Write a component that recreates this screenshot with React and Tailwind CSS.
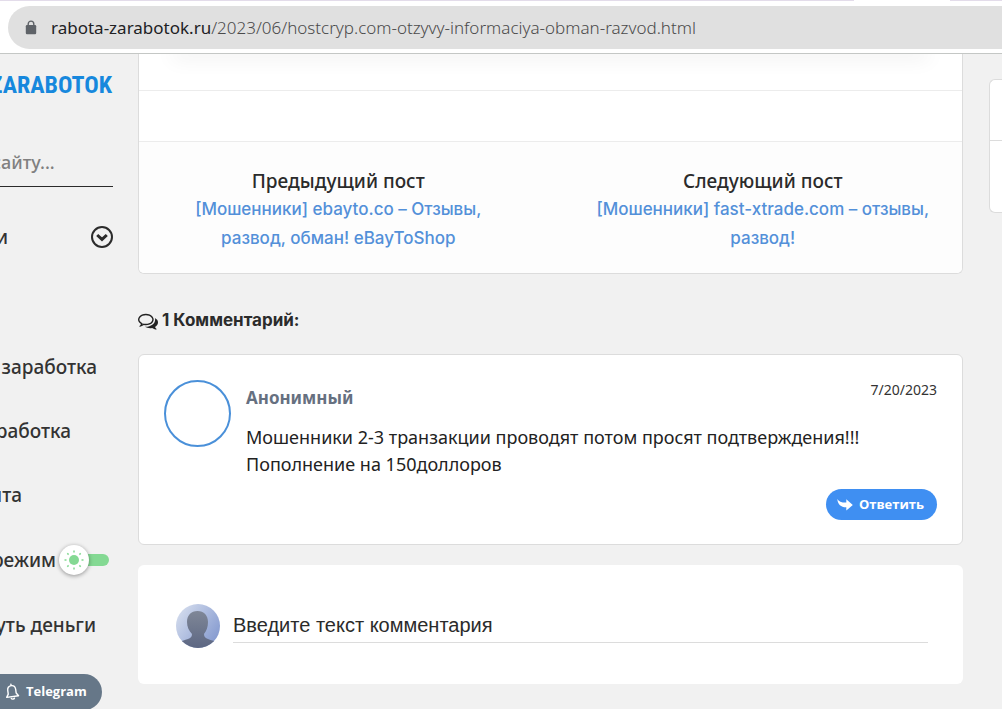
import React from "react";

const menuItems = [
  { text: "заработка", pad: "pr-[41px]" },
  { text: "работка", pad: "pr-[67px]" },
  { text: "йта", pad: "pr-[116px]" },
];

function LockIcon() {
  return (
    <svg viewBox="0 0 12 15" className="h-[15px] w-3 shrink-0" aria-hidden="true">
      <rect x="0.8" y="5" width="10.4" height="9.2" rx="1.2" fill="#5f6368" />
      <path d="M3.2 5.5V3.9a2.8 2.8 0 0 1 5.6 0v1.6" fill="none" stroke="#5f6368" strokeWidth="1.4" />
    </svg>
  );
}

function ChevronCircle() {
  return (
    <svg viewBox="0 0 24 24" className="size-6" aria-hidden="true" fill="none" stroke="#2b2b2b">
      <circle cx="12" cy="12" r="10" strokeWidth="2" />
      <path d="M7.2 10l4.8 4.4 4.8-4.4" strokeWidth="3" />
    </svg>
  );
}

function CommentsIcon() {
  return (
    <svg viewBox="0 0 1792 1792" className="size-5" fill="#222" aria-hidden="true">
      <path d="M704 384q-153 0-286 52t-211.5 141-78.5 191q0 82 53 158t149 132l97 56-35 84q34-20 62-39l44-31 53 10q78 14 153 14 153 0 286-52t211.5-141 78.5-191-78.5-191-211.5-141-286-52zm0-128q191 0 353.5 68.5t256.5 186.5 94 257-94 257-256.5 186.5-353.5 68.5q-86 0-176-16-124 88-278 128-36 9-86 16h-3q-11 0-20.5-8t-11.5-21q-1-3-1-6.5t.5-6.5 2-6l2.5-5 3.5-5.5 4-5 4.5-5 4-4.5q5-6 23-25t26-29.5 22.5-29 25-38.5 20.5-44q-124-72-195-177t-71-224q0-139 94-257t256.5-186.5 353.5-68.5zm822 1169q10 24 20.5 44t25 38.5 22.5 29 26 29.5 23 25q1 1 4 4.5t4.5 5 4 5 3.5 5.5l2.5 5 2 6 .5 6.5-1 6.500q-3 14-13 22t-22 7q-50-7-86-16-154-40-278-128-90 16-176 16-271 0-472-132 58 4 88 4 161 0 309-45t264-129q125-92 192-212t67-254q0-77-23-152 129 71 204 178t75 230q0 120-71 224.500t-195 176.500z" />
    </svg>
  );
}

function ReplyIcon() {
  return (
    <svg viewBox="0 0 16 13" className="h-[13px] w-4" fill="#fff" aria-hidden="true">
      <path d="M0.3 1C1.6 3.6 4.6 4.7 9.3 4.6V1.2L15.8 7 9.3 12.6V9.3C4 9.4 0.8 6.4 0.3 1z" />
    </svg>
  );
}

function BellIcon() {
  return (
    <svg viewBox="0 0 16 18" className="h-[18px] w-4" fill="none" stroke="#fff" strokeWidth="1.4" strokeLinejoin="round" strokeLinecap="round" aria-hidden="true">
      <g transform="rotate(-8 8 9)">
        <path d="M8 2.6c-2.600 0-4 1.800-4 4.200v3.800L2 13.600h12L12 10.600V6.800C12 4.400 10.600 2.600 8 2.600z" />
        <path d="M8 2.400V1.200M6.400 15.400c.6 1 2.600 1 3.200 0" />
      </g>
    </svg>
  );
}

function SunIcon() {
  return (
    <svg viewBox="0 0 20 20" className="size-5" fill="#84d993" stroke="#84d993" aria-hidden="true">
      <circle cx="10" cy="10" r="5" stroke="none" />
      <path d="M10 .5v2M10 17.500v2M.5 10h2M17.500 10h2M3.300 3.300l1.300 1.300M15.400 15.400l1.300 1.300M3.300 16.700l1.300-1.300M15.400 4.600l1.300-1.300" strokeWidth="1.5" />
    </svg>
  );
}

function Avatar() {
  return (
    <svg viewBox="0 0 44 44" className="size-11 shrink-0" aria-hidden="true">
      <defs>
        <linearGradient id="sky" x1="0" y1="0" x2="1" y2="0.7">
          <stop offset="0" stopColor="#dce3f0" />
          <stop offset="1" stopColor="#869bd0" />
        </linearGradient>
        <linearGradient id="body" x1="0" y1="0" x2="0" y2="1">
          <stop offset="0" stopColor="#7f8797" />
          <stop offset="1" stopColor="#5d6783" />
        </linearGradient>
        <clipPath id="round">
          <circle cx="22" cy="22" r="22" />
        </clipPath>
      </defs>
      <g clipPath="url(#round)">
        <rect width="44" height="44" fill="url(#sky)" />
        <path d="M21.500 7C15 7 11 11.500 11 18c0 5 2 9 5 12 0 3-1.500 4-4 5-3 1.200-7 2-12 4v5h44v-5c-5-2-9-2.500-12-4-2.500-1-4-2-4-5 2.500-3 4-7 4-12C32 11.500 28 7 21.500 7z" fill="url(#body)" />
      </g>
    </svg>
  );
}

function Sidebar() {
  return (
    <aside className="w-[138px] shrink-0 overflow-hidden font-['Noto_Sans',sans-serif] text-[19px] font-medium text-[#333]">
      <a href="#home" className="flex h-[62px] items-center justify-end pr-[26px] font-['Roboto_Condensed','Liberation_Sans_Narrow',Roboto,sans-serif] text-2xl font-bold text-[#1788dd]">
        ZARABOTOK
      </a>
      <form className="mt-[22px] mr-[25px] border-b border-[#2b2b2b]">
        <input aria-label="Поиск" placeholder="сайту..." className="-ml-2 block h-12 w-full bg-transparent text-lg outline-none placeholder:text-[#808080]" />
      </form>
      <button type="button" className="mt-[18px] flex h-16 w-full items-center justify-between pr-6">
        <span className="-ml-1">и</span>
        <ChevronCircle />
      </button>
      <nav className="mt-[66px]">
        {menuItems.map((item) => (
          <a key={item.text} href="#page" className={"flex h-16 items-center justify-end whitespace-nowrap " + item.pad}>
            {item.text}
          </a>
        ))}
        <label className="flex h-[66px] items-center justify-end pr-[29px]">
          <span className="mr-[3px]">режим</span>
          <span className="relative flex h-8 w-[50px] shrink-0 items-center">
            <input type="checkbox" className="peer absolute inset-0 opacity-0" />
            <span className="ml-3 h-3 flex-1 rounded-full bg-[#84d993]" />
            <span className="absolute left-0 flex size-[30px] items-center justify-center rounded-full bg-white shadow-[0_1px_4px_rgba(0,0,0,0.4)]">
              <SunIcon />
            </span>
          </span>
        </label>
        <a href="#refund" className="flex h-16 items-center justify-end whitespace-nowrap pr-[42px]">
          уть деньги
        </a>
      </nav>
      <a href="#telegram" className="mt-[17px] mr-9 flex h-9 items-center rounded-r-full bg-[#667788] pl-1 font-['Open_Sans',sans-serif] text-[13px] font-bold text-white">
        <BellIcon />
        <span className="ml-[6px]">Telegram</span>
      </a>
    </aside>
  );
}

function PostLink({ label, children }) {
  return (
    <div className="flex-1 px-6 text-center">
      <div className="font-['Noto_Sans',sans-serif] text-[19px] leading-[27px] font-medium text-[#2b2b2b]">{label}</div>
      <a href="#post" className="font-[Inter,sans-serif] text-[17px] leading-[29px] font-medium text-[#5390d9]">
        {children}
      </a>
    </div>
  );
}

export default function App() {
  return (
    <div className="flex h-screen flex-col overflow-hidden bg-[#f1f1f1]">
      <header className="shrink-0 border-b border-[#c4c7c5] bg-white">
        <div className="flex h-[6px] justify-end">
          <div className="h-px flex-1 bg-[#e3dcea]" />
          <div className="w-24" />
          <div className="h-px w-[52px] bg-[#e3dcea]" />
        </div>
        <div className="mb-1 ml-2 flex h-[43px] items-center rounded-l-full bg-[#e0e0e0] pl-[17px] font-['Noto_Sans',sans-serif] text-[17px]">
          <LockIcon />
          <span className="ml-[14px] whitespace-nowrap text-[#202124]">
            rabota-zarabotok.ru<span className="font-light text-[#4a4a4a]">/2023/06/hostcryp.com-otzyvy-informaciya-obman-razvod.html</span>
          </span>
        </div>
      </header>
      <div className="flex min-h-0 flex-1">
        <Sidebar />
        <main className="min-w-0 flex-1">
          <article className="overflow-hidden rounded-b-md border border-t-0 border-[#dcdcdc] bg-white">
            <div className="h-9">
              <div className="mx-9 h-0 shadow-[0_0_20px_3px_rgba(0,0,0,0.12)]" />
            </div>
            <div className="h-[51px] border-t border-[#ececec]" />
            <div className="flex gap-[26px] border-t border-[#ececec] bg-[#fdfdfd] pt-[26px] pb-5">
              <PostLink label="Предыдущий пост">
                [Мошенники] ebayto.co – Отзывы, развод, обман! eBayToShop
              </PostLink>
              <PostLink label="Следующий пост">
                [Мошенники] fast-xtrade.com – отзывы, развод!
              </PostLink>
            </div>
          </article>
          <h2 className="mt-[33px] flex h-7 items-center gap-1 font-[Inter,sans-serif] text-[17px] font-bold text-[#2b2b2b]">
            <CommentsIcon />1 Комментарий:
          </h2>
          <section className="mt-[19px] rounded-md border border-[#dcdcdc] bg-white p-[25px] pb-6">
            <div className="flex">
              <div className="size-[67px] shrink-0 rounded-full border-2 border-[#4a90d9]" />
              <div className="ml-[15px] min-w-0 flex-1 font-['Noto_Sans',sans-serif]">
                <div className="flex justify-between">
                  <span className="pt-1 text-[17px] leading-7 font-bold text-[#667080]">Анонимный</span>
                  <time className="text-sm leading-5 text-[#333]">7/20/2023</time>
                </div>
                <p className="mt-3 text-lg leading-[27px] text-[#222]">
                  Мошенники 2-3 транзакции проводят потом просят подтверждения!!!
                  <br />
                  Пополнение на 150доллоров
                </p>
              </div>
            </div>
            <div className="mt-[11px] flex justify-end">
              <button type="button" className="flex h-[31px] items-center gap-[6px] rounded-full bg-[#3f8ff2] pr-[13px] pl-[11px] font-['Open_Sans',sans-serif] text-[13px] font-bold text-white">
                <ReplyIcon />
                Ответить
              </button>
            </div>
          </section>
          <form className="mt-5 flex items-center gap-[13px] rounded-md bg-white pt-[39px] pr-[35px] pb-9 pl-[38px]">
            <Avatar />
            <input
              aria-label="Введите текст комментария"
              placeholder="Введите текст комментария"
              className="h-[34px] min-w-0 flex-1 border-b border-[#dcdcdc] bg-transparent font-['Liberation_Sans',Arial,sans-serif] text-xl outline-none placeholder:text-[#2b2b2b]"
            />
          </form>
        </main>
        <aside className="ml-[26px] w-[13px] shrink-0 pt-[25px]">
          <div className="h-[134px] rounded-l-md border border-r-0 border-[#dcdcdc] bg-white">
            <div className="h-[61px] border-b border-[#dcdcdc]" />
          </div>
        </aside>
      </div>
    </div>
  );
}
